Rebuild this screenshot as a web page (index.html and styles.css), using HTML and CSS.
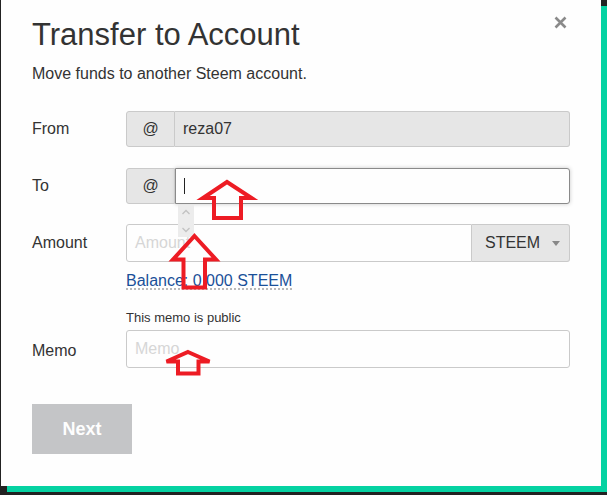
FILE: index.html
```html
<!DOCTYPE html>
<html>
<head>
<meta charset="utf-8">
<link rel="stylesheet" href="styles.css">
</head>
<body>
<div class="modal">
  <button class="close" aria-label="Close">
    <svg width="13" height="13" viewBox="0 0 13 13"><path d="M1.5 1.5 L11.5 11.5 M11.5 1.5 L1.5 11.5" stroke="#8a8a8a" stroke-width="2.6" fill="none"/></svg>
  </button>
  <h1 class="title">Transfer to Account</h1>
  <p class="subtitle">Move funds to another Steem account.</p>

  <div class="row row-from">
    <div class="label">From</div>
    <div class="group">
      <span class="addon">@</span>
      <span class="field field-disabled">reza07</span>
    </div>
  </div>

  <div class="row row-to">
    <div class="label">To</div>
    <div class="group">
      <span class="addon">@</span>
      <span class="field field-focus"><span class="caret"></span></span>
    </div>
  </div>

  <div class="row row-amount">
    <div class="label label-tall">Amount</div>
    <div class="group group-tall">
      <span class="field field-amount placeholder">Amount</span>
      <span class="select">STEEM<span class="tri"></span></span>
    </div>
  </div>

  <div class="sub balance-row"><a class="balance" href="#">Balance: 0.000 STEEM</a></div>
  <div class="sub note">This memo is public</div>

  <div class="row row-memo">
    <div class="label label-memo">Memo</div>
    <div class="group group-tall">
      <span class="field field-memo placeholder">Memo</span>
    </div>
  </div>

  <button class="next">Next</button>

  <div class="spinner">
    <svg width="16" height="32" viewBox="0 0 16 32"><path d="M4.5 9 L8 5.5 L11.5 9 M4.5 23 L8 26.5 L11.5 23" stroke="#c2c2c2" stroke-width="1.3" fill="none"/></svg>
  </div>

  <svg class="annot" width="607" height="495" viewBox="0 0 607 495">
    <g fill="none" stroke="#ed1c24" stroke-width="4" stroke-linejoin="miter">
      <path d="M227 182 L251.5 198 L241 198 L241 218 L214 218 L214 198 L203 198 Z"/>
      <path d="M194.5 236 L216 259.5 L205 259.5 L205 287.5 L183.5 287.5 L183.5 259.5 L173 259.5 Z"/>
      <path d="M188 352 L209.5 361.5 L198.5 361.5 L198.5 373.5 L178 373.5 L178 361.5 L166.5 361.5 Z"/>
    </g>
  </svg>
</div>
</body>
</html>
```

FILE: styles.css
```css
html, body {
  margin: 0;
  padding: 0;
}
body {
  background: #222222;
  width: 607px;
  height: 495px;
  overflow: hidden;
  font-family: "Liberation Sans", Arial, sans-serif;
  color: #333333;
}
.modal {
  position: relative;
  box-sizing: border-box;
  width: 600px;
  height: 486px;
  margin-left: 1px;
  background: #fefefe;
  box-shadow: 6px 6px 0 #05d2a2;
  padding: 16px 31px 0 31px;
}
.close {
  position: absolute;
  top: 16px;
  right: 34px;
  width: 13px;
  height: 13px;
  padding: 0;
  border: 0;
  background: none;
  display: block;
}
.close svg { display: block; }
.title {
  margin: 0;
  font-size: 31px;
  line-height: 37px;
  font-weight: normal;
  color: #333;
}
.subtitle {
  margin: 11px 0 0;
  font-size: 16px;
  line-height: 20px;
}
.row {
  display: flex;
  align-items: center;
}
.label {
  width: 94px;
  flex: none;
  font-size: 16px;
  line-height: 20px;
}
.label-memo {
  padding-top: 3px;
}
.group {
  display: flex;
  width: 444px;
  height: 36px;
  box-sizing: border-box;
  font-size: 16px;
}
.group-tall { height: 38px; }
.row-from { margin-top: 27px; }
.row-to { margin-top: 21px; }
.row-amount { margin-top: 20px; }
.addon {
  width: 49px;
  flex: none;
  box-sizing: border-box;
  border: 1px solid #cacaca;
  border-radius: 3px 0 0 3px;
  background: #e6e6e6;
  display: flex;
  align-items: center;
  justify-content: center;
  color: #333;
}
.field {
  flex: 1;
  box-sizing: border-box;
  border: 1px solid #cacaca;
  display: flex;
  align-items: center;
  padding-left: 8px;
  background: #fefefe;
}
.field-disabled {
  border-left: 0;
  background: #e6e6e6;
  border-radius: 0 3px 3px 0;
}
.field-focus {
  border: 1px solid #8a8a8a;
  border-radius: 0 3px 3px 0;
  box-shadow: 0 0 4px #cacaca;
}
.caret {
  display: block;
  width: 1px;
  height: 16px;
  background: #222;
}
.field-amount {
  border-radius: 3px 0 0 3px;
}
.field-memo {
  border-radius: 3px;
}
.placeholder {
  color: #d6d6d6;
}
.select {
  width: 98px;
  flex: none;
  box-sizing: border-box;
  border: 1px solid #cacaca;
  border-left: 0;
  border-radius: 0 3px 3px 0;
  background: #e6e6e6;
  display: flex;
  align-items: center;
  padding-left: 13px;
  color: #333;
  position: relative;
}
.tri {
  position: absolute;
  right: 9px;
  top: 16px;
  width: 0;
  height: 0;
  border-left: 4px solid transparent;
  border-right: 4px solid transparent;
  border-top: 5px solid #888;
}
.sub {
  margin-left: 94px;
}
.balance-row {
  margin-top: 9px;
  font-size: 16px;
  line-height: 20px;
}
.balance {
  color: #1a5099;
  text-decoration: underline dotted #a8a8a8;
  text-underline-offset: 3px;
}
.note {
  margin-top: 19px;
  font-size: 13px;
  line-height: 16px;
  color: #333;
}
.row-memo { margin-top: 4px; }
.next {
  display: block;
  margin-top: 36px;
  width: 100px;
  height: 50px;
  border: 0;
  padding: 0;
  background: #c4c5c7;
  color: #fefefe;
  font-family: "Liberation Sans", Arial, sans-serif;
  font-size: 18px;
  font-weight: bold;
}
.spinner {
  position: absolute;
  left: 177px;
  top: 205px;
  width: 16px;
  height: 32px;
  background: #ececec;
}
.spinner svg { display: block; }
.annot {
  position: absolute;
  left: -1px;
  top: 0;
  pointer-events: none;
}
```
